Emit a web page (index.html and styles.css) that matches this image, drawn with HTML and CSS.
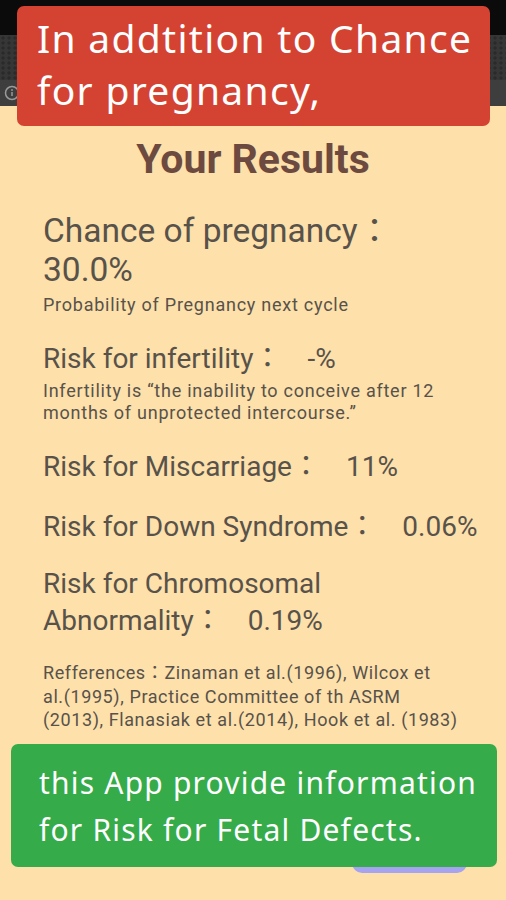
FILE: index.html
```html
<!DOCTYPE html>
<html lang="en">
<head>
<meta charset="utf-8">
<title>Your Results</title>
<link rel="stylesheet" href="styles.css">
</head>
<body>
<div class="screen">
  <div class="statusbar"></div>
  <div class="toolbar">
    <div class="toolbar-info">
      <svg class="info-icon" width="16" height="16" viewBox="0 0 16 16"><circle cx="8" cy="8" r="6.5" fill="none" stroke="#9a9a9a" stroke-width="1.5"/><path d="M8 7v4" stroke="#9a9a9a" stroke-width="1.5"/><circle cx="8" cy="5" r="0.9" fill="#9a9a9a"/></svg>
    </div>
  </div>
  <main class="results">
    <h1 class="results-title">Your Results</h1>
    <div class="items">
      <section class="item">
        <p class="item-main item-main-lg">Chance of pregnancy<span class="colon">：</span><br>30.0%</p>
        <p class="item-note">Probability of Pregnancy next cycle</p>
      </section>
      <section class="item">
        <p class="item-main">Risk for infertility<span class="colon">：</span><span class="value">-%</span></p>
        <p class="item-note item-note-2">Infertility is “the inability to conceive after 12 months of unprotected intercourse.”</p>
      </section>
      <section class="item">
        <p class="item-main">Risk for Miscarriage<span class="colon">：</span><span class="value">11%</span></p>
      </section>
      <section class="item">
        <p class="item-main">Risk for Down Syndrome<span class="colon">：</span><span class="value">0.06%</span></p>
      </section>
      <section class="item">
        <p class="item-main">Risk for Chromosomal<br>Abnormality<span class="colon">：</span><span class="value">0.19%</span></p>
      </section>
      <section class="item">
        <p class="item-note refs">Refferences<span class="colon-sm">：</span>Zinaman et <span class="nb">al.(1996),</span> Wilcox et <span class="nb">al.(1995),</span> Practice Committee of th ASRM <span class="nb">(2013),</span> Flanasiak et <span class="nb">al.(2014),</span> Hook et al. (1983)</p>
      </section>
    </div>
    <div class="actions">
      <button class="action-btn" type="button" aria-label="OK"></button>
    </div>
  </main>
  <div class="caption caption-top">In addtition to Chance for pregnancy,</div>
  <div class="caption caption-bottom">this App provide information for Risk for Fetal Defects.</div>
</div>
</body>
</html>
```
FILE: styles.css
```css
* { box-sizing: border-box; }
html, body { margin: 0; padding: 0; }
body {
  width: 506px;
  height: 900px;
  overflow: hidden;
  background: #fde0aa;
  font-family: Roboto, "Noto Sans CJK JP", sans-serif;
}
.screen {
  position: relative;
  width: 506px;
  height: 900px;
  display: flex;
  flex-direction: column;
}
.statusbar {
  height: 35px;
  background: #0b0b0b;
}
.toolbar {
  height: 71px;
  background-color: #363636;
  background-image: radial-gradient(circle at 3px 3px, #2a2a2a 1.4px, transparent 1.8px);
  background-size: 6px 5px;
  display: flex;
  align-items: flex-end;
}
.toolbar-info {
  height: 26px;
  width: 100%;
  display: flex;
  align-items: center;
  padding-left: 4px;
  background: #3e3e3e;
}
.results {
  flex: 1;
  display: flex;
  flex-direction: column;
  padding: 29px 8px 27px 43px;
  color: #58524a;
}
.results-title {
  margin: 0;
  text-align: center;
  margin-left: -35px;
  font-size: 41px;
  line-height: 48px;
  font-weight: 700;
  color: #6d4a3f;
}
.items {
  margin-top: 25px;
  display: flex;
  flex-direction: column;
  gap: 22.7px;
}
.item p { margin: 0; }
.item-main {
  font-size: 28px;
  line-height: 34px;
}
.item-main-lg {
  font-size: 33.5px;
  line-height: 39px;
}
.colon {
  font-family: "Noto Sans CJK JP", sans-serif;
}
.value { margin-left: 26px; }
.item-note {
  margin-top: 4.6px !important;
  font-size: 18px;
  letter-spacing: 0.75px;
  line-height: 22.5px;
  padding-right: 50px;
}
.item-note-2 {
  margin-top: 4.7px !important;
  line-height: 22px;
}
.refs {
  margin-top: 0 !important;
  max-width: 422px;
  line-height: 23.5px;
  letter-spacing: 0.6px;
  padding-right: 0;
}
.nb { white-space: nowrap; }
.colon-sm { font-family: "Noto Sans CJK JP", sans-serif; }
.actions {
  margin-top: auto;
  display: flex;
  justify-content: flex-end;
  padding-right: 31px;
}
.action-btn {
  width: 115px;
  height: 44px;
  border: none;
  border-radius: 10px;
  background: #a6a4f0;
}
.caption {
  position: absolute;
  color: #fff;
  font-family: "Noto Sans", "Noto Sans CJK JP", sans-serif;
  border-radius: 7px;
}
.caption-top {
  left: 17px;
  top: 6px;
  width: 473px;
  height: 120px;
  background: #d44332;
  font-size: 39px;
  letter-spacing: 1.3px;
  line-height: 52px;
  padding: 6px 6px 0 20px;
}
.caption-bottom {
  left: 11px;
  top: 744px;
  width: 486px;
  height: 123px;
  background: #35ab4a;
  font-size: 30px;
  letter-spacing: 1.2px;
  line-height: 47px;
  padding: 15px 10px 0 28px;
}
```
